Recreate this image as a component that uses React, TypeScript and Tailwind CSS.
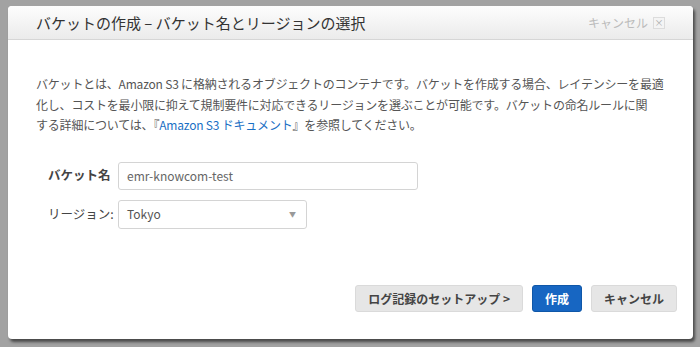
import React from 'react';

const jp = { fontFamily: '"Noto Sans CJK JP", "Noto Sans", "Liberation Sans", sans-serif' };

const App: React.FC = () => {
  return (
    <div className="w-[700px] h-[347px] bg-[#a2a2a2] pt-[6px] pl-[8px] overflow-hidden" style={jp}>
      <div className="w-[685px] h-[333px] bg-white rounded-[4px] shadow-[2px_3px_3px_rgba(0,0,0,0.55)] flex flex-col overflow-hidden">
        <div className="h-[34px] shrink-0 flex items-center justify-between pl-[28px] pr-[28px] bg-gradient-to-b from-[#fdfdfd] to-[#ebebeb] border-b border-[#d6d6d6]">
          <h1 className="text-[15px] text-[#333] leading-none">バケットの作成 – バケット名とリージョンの選択</h1>
          <div className="flex items-center gap-[5px] text-[12px] text-[#bbb]">
            <span>キャンセル</span>
            <span className="w-[12px] h-[12px] border border-[#dcdcdc] bg-[#f4f4f4] text-[#aaa] text-[9px] leading-[9px] flex items-center justify-center">×</span>
          </div>
        </div>

        <div className="flex-1 flex flex-col pl-[28px] pr-[16px]">
          <p className="mt-[34px] text-[12px] leading-[20.5px] tracking-[-0.2px] text-[#555] whitespace-nowrap">
            バケットとは、Amazon S3 に格納されるオブジェクトのコンテナです。バケットを作成する場合、レイテンシーを最適
            <br />
            化し、コストを最小限に抑えて規制要件に対応できるリージョンを選ぶことが可能です。バケットの命名ルールに関
            <br />
            する詳細については、『<span className="text-[#1a6fc4]">Amazon S3 ドキュメント</span>』を参照してください。
          </p>

          <div className="mt-[26px] flex flex-col gap-[10px] pl-[12px]">
            <div className="flex items-center">
              <label className="w-[70px] text-[12.5px] font-bold text-[#444]">バケット名</label>
              <div className="w-[300px] h-[28px] border border-[#d4d4d4] rounded-[3px] flex items-center px-[8px] text-[12px] text-[#666]">
                emr-knowcom-test
              </div>
            </div>
            <div className="flex items-center">
              <label className="w-[70px] text-[12.5px] text-[#444]">リージョン:</label>
              <div className="w-[189px] h-[29px] border border-[#d4d4d4] rounded-[3px] flex items-center justify-between pl-[8px] pr-[10px] text-[12px] text-[#555]">
                <span>Tokyo</span>
                <span className="text-[7px] text-[#999]">▼</span>
              </div>
            </div>
          </div>

          <div className="mt-auto mb-[27px] flex justify-end gap-[9px]">
            <button className="h-[27px] px-[12px] rounded-[3px] bg-[#e6e6e6] border border-[#dadada] text-[12px] font-bold text-[#444]">
              ログ記録のセットアップ &gt;
            </button>
            <button className="h-[27px] px-[12px] rounded-[3px] bg-[#1766c2] border border-[#0f57a8] text-[12px] font-bold text-white">
              作成
            </button>
            <button className="h-[27px] px-[12px] rounded-[3px] bg-[#e6e6e6] border border-[#dadada] text-[12px] font-bold text-[#444]">
              キャンセル
            </button>
          </div>
        </div>
      </div>
    </div>
  );
};

export default App;
